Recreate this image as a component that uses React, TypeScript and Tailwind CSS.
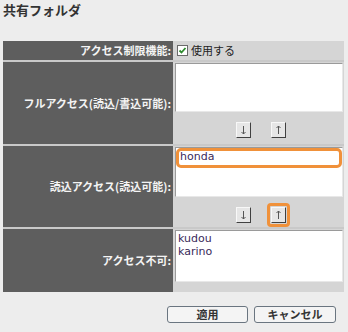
import { ReactNode } from 'react';

const font = { fontFamily: '"Noto Sans CJK JP", "Noto Sans", sans-serif' };

function Label({ children }: { children: ReactNode }) {
  return (
    <div className="w-[170px] shrink-0 bg-[#5e5e5e] flex items-center justify-end pr-[2px] text-[11px] font-bold text-[#f4f4f4] leading-none">
      {children}
    </div>
  );
}

function ListBox({ items, height, highlight }: { items: string[]; height: string; highlight?: boolean }) {
  return (
    <div className={`bg-white border border-t-[#9a9a9a] border-l-[#9a9a9a] border-r-[#e8e8e8] border-b-[#e8e8e8] ${height} px-[2px] pt-[1px] text-[11px] leading-[13px] text-[#3a2a5a]`} style={{ fontFamily: 'Verdana, "DejaVu Sans", sans-serif' }}>
      {items.map((it) =>
        highlight ? (
          <div key={it} className="-mx-[2px] -mt-[1px] h-[20px] border-[3px] border-[#f0913a] rounded-[5px] px-[1px] leading-[12px]">
            {it}
          </div>
        ) : (
          <div key={it}>{it}</div>
        )
      )}
    </div>
  );
}

function ArrowButton({ up, active }: { up?: boolean; active?: boolean }) {
  const btn = (
    <div className="w-[15px] h-[16px] bg-[#e6e6e6] border border-t-[#f8f8f8] border-l-[#f8f8f8] border-r-[#404040] border-b-[#404040] flex items-center justify-center">
      <svg width="7" height="10" viewBox="0 0 7 10">
        {up ? (
          <path d="M3.5 1 L3.5 9 M1.5 3 L3.5 1 L5.5 3" stroke="#555" strokeWidth="1" fill="none" />
        ) : (
          <path d="M3.5 1 L3.5 9 M1.5 7 L3.5 9 L5.5 7" stroke="#555" strokeWidth="1" fill="none" />
        )}
      </svg>
    </div>
  );
  if (active) {
    return <div className="border-[3px] border-[#f0913a] rounded-[4px] p-[1px] -m-[4px]">{btn}</div>;
  }
  return btn;
}

function Arrows({ active }: { active?: boolean }) {
  return (
    <div className="flex justify-center gap-[20px] pl-[3px] mt-[2px] h-[32px] items-center">
      <ArrowButton />
      <ArrowButton up active={active} />
    </div>
  );
}

export default function App() {
  return (
    <div className="w-[348px] h-[332px] bg-[#ededed] overflow-hidden" style={font}>
      <h1 className="pl-[3px] pt-[2px] text-[13px] font-bold text-[#333] leading-[16px]">共有フォルダ</h1>

      <div className="mt-[23px] ml-[3px] w-[341px] flex flex-col gap-[2px] bg-[#c9c9c9]">
        <div className="flex h-[19px]">
          <Label>アクセス制限機能:</Label>
          <div className="flex-1 bg-[#d5d5d5] flex items-center gap-[3px] pl-[4px] text-[11px] text-[#222]">
            <span className="w-[11px] h-[11px] bg-white border border-[#6a6a6a] flex items-center justify-center">
              <svg width="9" height="9" viewBox="0 0 9 9">
                <path d="M1.5 4.5 L3.5 6.5 L7.5 2" stroke="#2c8a2c" strokeWidth="1.8" fill="none" />
              </svg>
            </span>
            使用する
          </div>
        </div>

        <div className="flex h-[82px]">
          <Label>フルアクセス(読込/書込可能):</Label>
          <div className="flex-1 bg-[#d5d5d5] pl-[2px] pr-[1px] pt-[1px]">
            <ListBox items={[]} height="h-[49px]" />
            <Arrows />
          </div>
        </div>

        <div className="flex h-[81px]">
          <Label>読込アクセス(読込可能):</Label>
          <div className="flex-1 bg-[#d5d5d5] pl-[2px] pr-[1px] pt-[1px]">
            <ListBox items={['honda']} height="h-[50px]" highlight />
            <Arrows active />
          </div>
        </div>

        <div className="flex h-[63px]">
          <Label>アクセス不可:</Label>
          <div className="flex-1 bg-[#d5d5d5] pl-[2px] pr-[1px] pt-[1px]">
            <ListBox items={['kudou', 'karino']} height="h-[52px]" />
          </div>
        </div>
      </div>

      <div className="flex justify-end gap-[6px] pr-[12px] mt-[14px]">
        <button className="w-[81px] h-[17px] bg-[#f4f4f4] border border-[#6a7580] rounded-[3px] text-[11px] font-bold text-[#333] leading-none">適用</button>
        <button className="w-[82px] h-[17px] bg-[#f4f4f4] border border-[#6a7580] rounded-[3px] text-[11px] font-bold text-[#333] leading-none">キャンセル</button>
      </div>
    </div>
  );
}
